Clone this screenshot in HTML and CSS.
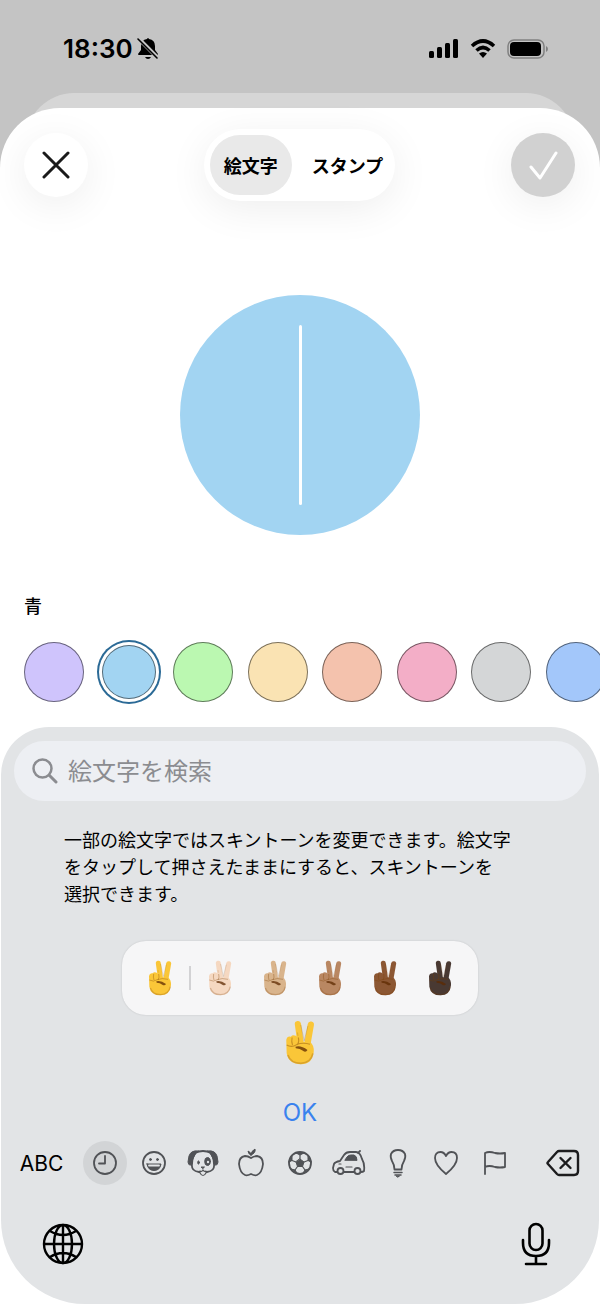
FILE: index.html
```
<!DOCTYPE html>
<html lang="ja">
<head>
<meta charset="UTF-8" />
<meta name="viewport" content="width=device-width, initial-scale=1" />
<title>絵文字</title>
<link rel="stylesheet" href="styles.css">
</head>
<body>

<svg class="sprite" aria-hidden="true">
  <symbol id="hand" viewBox="0 0 72 108">
    <g fill="none" stroke="currentColor" stroke-linecap="round">
      <path d="M31 10L38 60" stroke-width="15" />
      <path d="M62 11L53 62" stroke-width="15" />
    </g>
    <path d="M3 48Q5 38 14 40Q18 35 26 38L44 52L60 52Q70 60 69 76Q66 106 38 106Q8 106 4 80Z" fill="currentColor" />
    <path d="M7 84Q13 104 38 104Q62 103 67 80" fill="none" stroke="#7a3c00" stroke-opacity=".25" stroke-width="4" />
    <path d="M38 12L46 50L55 14M30 30L31 38" fill="none" stroke="#7a3c00" stroke-opacity=".25" stroke-width="2" />
    <path d="M17 42Q15 52 18 60M32 42Q35 52 30 60M4 60Q16 67 28 59Q42 53 60 58" fill="none" stroke="#7a3c00" stroke-opacity=".4" stroke-width="2.500" />
    <path d="M25 64Q38 60 54 72Q50 79 43 74Q36 68 26 68Z" fill="#5e2a00" fill-opacity=".75" />
  </symbol>
</svg>

<header class="status-bar">
  <div class="status-time">
    <span>18:30</span>
    <svg width="22" height="24" viewBox="0 0 22 24" aria-label="消音">
      <path d="M2 18Q1 18 1 17L4 13V9Q4 3 10 2Q11 0 12 2Q18 3 18 9V13L21 17Q21 18 20 18Z" />
      <path d="M8 20H14Q13 22 11 22Q9 22 8 20Z" />
      <path d="M1 1L21 21" stroke="#c4c4c4" stroke-width="4" />
      <path d="M1 2L20 21" stroke="#000" stroke-width="1.600" stroke-linecap="round" />
    </svg>
  </div>
  <div class="status-icons">
    <svg width="30" height="20" viewBox="0 0 30 20" aria-label="電波">
      <rect x="0" y="12" width="5" height="7" rx="1.5" />
      <rect x="8" y="8" width="5" height="11" rx="1.5" />
      <rect x="16" y="4" width="5" height="15" rx="1.5" />
      <rect x="24" y="0" width="5" height="19" rx="1.5" />
    </svg>
    <svg width="26" height="20" viewBox="0 0 26 20" aria-label="Wi-Fi">
      <path d="M2 7Q13 -3 24 7M6.500 11.500Q13 5.500 19.500 11.500" fill="none" stroke="#000" stroke-width="3.600" />
      <path d="M9 14.500Q13 11.500 17 14.500L13 19Z" />
    </svg>
    <svg width="41" height="20" viewBox="0 0 41 20" aria-label="バッテリー">
      <rect x="1" y="1" width="36" height="18" rx="6" fill="none" stroke="#808080" stroke-width="1.500" />
      <rect x="3" y="3" width="31" height="14" rx="4" />
      <path d="M39 7Q41 8 41 10Q41 12 39 13Z" fill="#808080" />
    </svg>
  </div>
</header>

<div class="back-sheet"></div>

<main class="sheet">
  <div class="toolbar">
    <button class="round-btn" aria-label="閉じる">
      <svg width="28" height="28" viewBox="0 0 28 28"><path d="M2 2L26 26M26 2L2 26" fill="none" stroke="#1a1a1a" stroke-width="3" stroke-linecap="round" /></svg>
    </button>
    <div class="segments">
      <button class="segment active" aria-pressed="true">絵文字</button>
      <button class="segment" aria-pressed="false">スタンプ</button>
    </div>
    <button class="round-btn done" aria-label="完了">
      <svg width="30" height="30" viewBox="0 0 30 30"><path d="M3 17L12 28L28 3" fill="none" stroke="#fff" stroke-width="3" stroke-linecap="round" stroke-linejoin="round" /></svg>
    </button>
  </div>

  <div class="preview"><span class="caret"></span></div>

  <fieldset class="colors">
    <legend>青</legend>
    <div class="swatches">
      <input type="radio" name="color" class="swatch purple" aria-label="紫" />
      <input type="radio" name="color" class="swatch blue" aria-label="青" checked />
      <input type="radio" name="color" class="swatch green" aria-label="緑" />
      <input type="radio" name="color" class="swatch yellow" aria-label="黄" />
      <input type="radio" name="color" class="swatch orange" aria-label="オレンジ" />
      <input type="radio" name="color" class="swatch pink" aria-label="ピンク" />
      <input type="radio" name="color" class="swatch gray" aria-label="グレー" />
      <input type="radio" name="color" class="swatch indigo" aria-label="藍" />
    </div>
  </fieldset>

  <section class="keyboard" aria-label="絵文字キーボード">
    <label class="search">
      <svg width="26" height="26" viewBox="0 0 26 26" fill="none" stroke="#8b8c90" stroke-linecap="round"><circle cx="10.500" cy="10.500" r="9" stroke-width="2.500" /><path d="M17.500 17.500L24 24" stroke-width="3" /></svg>
      <input type="search" placeholder="絵文字を検索" aria-label="絵文字を検索" />
    </label>

    <p class="tip">一部の絵文字ではスキントーンを変更できます。絵文字<br>をタップして押さえたままにすると、スキントーンを<br>選択できます。</p>

    <div class="tones">
      <svg class="hand tone-default"><use href="#hand" /></svg>
      <span class="divider"></span>
      <svg class="hand tone-light"><use href="#hand" /></svg>
      <svg class="hand tone-medium-light"><use href="#hand" /></svg>
      <svg class="hand tone-medium"><use href="#hand" /></svg>
      <svg class="hand tone-medium-dark"><use href="#hand" /></svg>
      <svg class="hand tone-dark"><use href="#hand" /></svg>
    </div>
    <svg class="hand large tone-default"><use href="#hand" /></svg>

    <button class="ok-btn">OK</button>

    <div class="key-row">
      <button class="abc-btn">ABC</button>
      <nav class="categories" aria-label="カテゴリ">
        <button class="category active" aria-label="よく使う項目">
          <svg width="26" height="26" viewBox="0 0 26 26"><circle cx="13" cy="13" r="11" /><path d="M13 6V13.500H7" /></svg>
        </button>
        <button class="category" aria-label="スマイリー">
          <svg width="26" height="26" viewBox="0 0 26 26"><circle cx="13" cy="13" r="11" /><path d="M6 14H20Q19 20.500 13 20.500Q7 20.500 6 14Z" class="solid" /><path d="M8 15.500H18" stroke="#e2e4e6" /><circle cx="9.500" cy="9.500" r="1" class="solid" /><circle cx="16.500" cy="9.500" r="1" class="solid" /></svg>
        </button>
        <button class="category" aria-label="動物">
          <svg width="32" height="28" viewBox="0 0 32 28"><path d="M8 4Q16 0 24 4Q27 9 27 15Q28 22 20 23H12Q4 22 5 15Q5 9 8 4Z" /><path d="M11 2Q4 1 2 7L1 13Q2 18 5 15Q5 8 11 2ZM21 2Q28 1 30 7L31 13Q30 18 27 15Q27 8 21 2Z" class="solid" /><ellipse cx="20.500" cy="12.500" rx="2.800" ry="4" class="solid" /><circle cx="21" cy="13" r="1.200" fill="#e2e4e6" stroke="none" /><ellipse cx="11.500" cy="13.500" rx=".8" ry="1.600" class="solid" /><path d="M14.500 18H17.500L16 19.500Z" class="solid" /><path d="M13 22V24Q16 29 19 24V22Q17 23 16 21Q15 23 13 22Z" fill="#e2e4e6" stroke-width="1.200" /></svg>
        </button>
        <button class="category" aria-label="食べ物">
          <svg width="28" height="30" viewBox="0 0 28 30"><path d="M14 10Q11 8 8 8Q2 9 2 16Q3 25 8 27Q10 28 14 26Q18 28 20 27Q25 25 26 16Q26 9 20 8Q17 8 14 10Z" /><path d="M14 7Q14 3 18 1Q19 5 14 7ZM14 7Q11 6 11 3Q14 4 14 7Z" class="solid" /></svg>
        </button>
        <button class="category" aria-label="アクティビティ">
          <svg width="26" height="26" viewBox="0 0 26 26"><circle cx="13" cy="13" r="11" /><path d="M13 9L17 12L15.500 16.500H10.500L9 12Z" class="solid" /><g class="seams"><path d="M13 9V5M17 12L21 10.500M15.500 16.500L18 20M10.500 16.500L8 20M9 12L5 10.500" /></g><path d="M9 3L13 5L17 3ZM2 12L5 10.500L5 6ZM24 12L21 10.500L21 6ZM4 19L8 20L10 23ZM22 19L18 20L16 23Z" class="solid" /></svg>
        </button>
        <button class="category" aria-label="旅行">
          <svg width="34" height="26" viewBox="0 0 34 26"><path d="M5 22H3Q1 21 1 18L2 14Q3 12 8 11L12 5Q14 2 18 2H24Q28 2 30 9Q33 14 32 21Q31 22 29 22M12 22H22M26 3L28 1" /><path d="M7 14H9M14 17H20" stroke-width="1.200" /><path d="M13 10L15 7Q16 5 19 5H22Q25 6 25 10Z" class="solid" /><circle cx="8.500" cy="21" r="3" /><circle cx="25.500" cy="21" r="3" /></svg>
        </button>
        <button class="category" aria-label="物">
          <svg width="20" height="30" viewBox="0 0 20 30"><path d="M6.500 21.500Q6.500 17 4 13Q2 9 3 6Q5 2 10 2Q15 2 17 6Q18 9 16 13Q13.500 17 13.500 21.500Z" /><path d="M6 24.500H14M7 27H13" stroke-width="1.500" /><path d="M8.500 28H11.500L10 29Z" class="solid" /></svg>
        </button>
        <button class="category" aria-label="記号">
          <svg width="26" height="26" viewBox="0 0 26 26"><path d="M13 24Q2 15 2 8Q2 2 7.500 2Q11 2 13 6Q15 2 18.500 2Q24 2 24 8Q24 15 13 24Z" /></svg>
        </button>
        <button class="category" aria-label="旗">
          <svg width="24" height="26" viewBox="0 0 24 26"><path d="M2 24V3Q6 1 12 3Q17 4 22 3V17Q17 18 12 17Q6 15 2 17" /></svg>
        </button>
      </nav>
      <button class="delete-btn" aria-label="削除">
        <svg width="34" height="28" viewBox="0 0 34 28" fill="none" stroke="#1c1c1e" stroke-width="2.400" stroke-linecap="round" stroke-linejoin="round"><path d="M13 2H28Q32 2 32 6V22Q32 26 28 26H13Q12 26 11 25L2 15Q1 14 2 13L11 3Q12 2 13 2Z" /><path d="M14.500 9L24.500 19M24.500 9L14.500 19" /></svg>
      </button>
    </div>

    <div class="bottom-row">
      <button aria-label="次のキーボード">
        <svg width="42" height="42" viewBox="0 0 42 42" fill="none" stroke="#000" stroke-width="2.400"><circle cx="21" cy="21" r="19" /><path d="M21 2V40M2 21H40M8 8Q21 16 34 8M8 34Q21 26 34 34" /><ellipse cx="21" cy="21" rx="9" ry="19" /></svg>
      </button>
      <button aria-label="音声入力">
        <svg width="30" height="44" viewBox="0 0 30 44" fill="none" stroke="#000" stroke-width="2.600" stroke-linecap="round"><rect x="8.500" y="2" width="13" height="26" rx="6.500" /><path d="M2 18V21Q2 34 15 34Q28 34 28 21V18M15 34V42M5 42H25" /></svg>
      </button>
    </div>
  </section>
</main>

</body>
</html>
```

FILE: styles.css
```
* {
  box-sizing: border-box;
}
body {
  margin: 0;
  min-height: 100vh;
  background: #c4c4c4;
  color: #000;
  font-family: Inter, "Noto Sans CJK JP", sans-serif;
  overflow-x: hidden;
}
button {
  display: flex;
  align-items: center;
  justify-content: center;
  border: none;
  padding: 0;
  background: none;
  color: inherit;
  font-family: inherit;
  cursor: pointer;
}
svg {
  display: block;
  flex-shrink: 0;
}
.sprite {
  display: none;
}

/* status bar */
.status-bar {
  display: flex;
  align-items: center;
  justify-content: space-between;
  height: 93px;
  padding: 4px 52px 0 63px;
}
.status-time {
  display: flex;
  align-items: center;
  gap: 4px;
  font-size: 26px;
  font-weight: 600;
}
.status-icons {
  display: flex;
  align-items: center;
  gap: 11px;
}
.back-sheet {
  height: 60px;
  margin: 0 26px -45px;
  border-radius: 48px 48px 0 0;
  background: #d6d6d6;
}

/* sheet */
.sheet {
  position: relative;
  padding: 21px 0 1px;
  border-radius: 60px 60px 0 0;
  background: #fff;
}
.toolbar {
  display: flex;
  align-items: center;
  justify-content: space-between;
  padding: 0 25px 0 24px;
}
.round-btn {
  width: 64px;
  height: 64px;
  border-radius: 50%;
  background: #fff;
  box-shadow: 0 8px 40px rgba(0, 0, 0, 0.07);
}
.round-btn.done {
  background: #d1d1d1;
}
.segments {
  display: flex;
  padding: 6px;
  border-radius: 36px;
  background: #fff;
  box-shadow: 0 8px 40px rgba(0, 0, 0, 0.07);
}
.segment {
  height: 60px;
  padding: 0 6px 0 20px;
  border-radius: 30px;
  font-size: 18px;
  font-weight: 600;
}
.segment.active {
  padding: 0 14px;
  background: #e9e9e9;
}
.preview {
  display: flex;
  align-items: center;
  justify-content: center;
  width: 240px;
  height: 240px;
  margin: 94px auto 60px;
  border-radius: 50%;
  background: #a2d4f2;
}
.caret {
  width: 3px;
  height: 180px;
  border-radius: 2px;
  background: #fff;
}

/* colors */
.colors {
  margin: 0;
  border: none;
  padding: 0 0 0 24px;
  min-width: 0;
  overflow: hidden;
}
.colors legend {
  padding: 0;
  font-size: 18px;
  font-weight: 500;
  line-height: 24px;
}
.swatches {
  display: flex;
  align-items: center;
  justify-content: space-between;
  height: 64px;
  margin: 21px -6px 23px 0;
}
.swatch {
  appearance: none;
  flex-shrink: 0;
  width: 60px;
  height: 60px;
  margin: 0;
  border: 1px solid rgba(0, 0, 0, 0.5);
  border-radius: 50%;
  cursor: pointer;
}
.swatch:checked {
  width: 54px;
  height: 54px;
  margin: 0 3px;
  box-shadow: 0 0 0 3px #fff, 0 0 0 5px #2b6a96;
}
.purple { background: #cfc4fc; }
.blue { background: #a2d4f2; }
.green { background: #bbf8b1; }
.yellow { background: #fae3b3; }
.orange { background: #f4c2ad; }
.pink { background: #f3aec7; }
.gray { background: #d4d6d7; }
.indigo { background: #a3c7fa; }

/* keyboard */
.keyboard {
  margin: 0 1px;
  padding: 14px 13px 38px;
  border-radius: 48px 48px 84px 84px;
  background: #e2e4e6;
}
.search {
  display: flex;
  align-items: center;
  gap: 10px;
  height: 60px;
  padding: 0 18px;
  border-radius: 30px;
  background: #edeff3;
}
.search input {
  flex: 1;
  min-width: 0;
  border: none;
  padding: 0;
  outline: none;
  background: none;
  font-family: inherit;
  font-size: 24px;
}
.search input::placeholder {
  color: #8b8c90;
}
.tip {
  margin: 26px 50px 33px;
  font-size: 18px;
  line-height: 27px;
  white-space: nowrap;
}
.tones {
  display: flex;
  align-items: center;
  width: fit-content;
  height: 74px;
  margin: 0 auto 5px;
  padding: 0 26px;
  gap: 31px;
  border-radius: 24px;
  background: #f6f6f7;
  box-shadow: 0 0 2px rgba(0, 0, 0, 0.15);
}
.hand {
  width: 24px;
  height: 36px;
}
.hand.large {
  width: 30px;
  height: 45px;
  margin: 0 auto;
}
.divider {
  width: 2px;
  height: 24px;
  margin: 0 -14px;
  background: #d2d2d4;
}
.tone-default { color: #fac638; }
.tone-light { color: #f5d8c1; }
.tone-medium-light { color: #d9b48c; }
.tone-medium { color: #b98762; }
.tone-medium-dark { color: #8c5733; }
.tone-dark { color: #493932; }
.ok-btn {
  margin: 30px auto 10px;
  color: #3a82ee;
  font-size: 24px;
  line-height: 36px;
}
.key-row {
  display: flex;
  align-items: center;
  margin: 0 6px;
}
.abc-btn {
  width: 43px;
  font-size: 21px;
}
.categories {
  display: flex;
  flex: 1;
  justify-content: space-between;
  margin: 0 29px 0 20px;
}
.category {
  width: 44px;
  height: 44px;
  border-radius: 50%;
}
.category.active {
  background: #d2d4d6;
}
.category svg {
  fill: none;
  stroke: #505256;
  stroke-width: 1.8;
  stroke-linecap: round;
  stroke-linejoin: round;
}
.category .solid {
  fill: #505256;
  stroke-width: 1;
}
.category .seams {
  stroke-width: 1.2;
}
.bottom-row {
  display: flex;
  align-items: center;
  justify-content: space-between;
  margin: 37px 35px 0 28px;
}
```
